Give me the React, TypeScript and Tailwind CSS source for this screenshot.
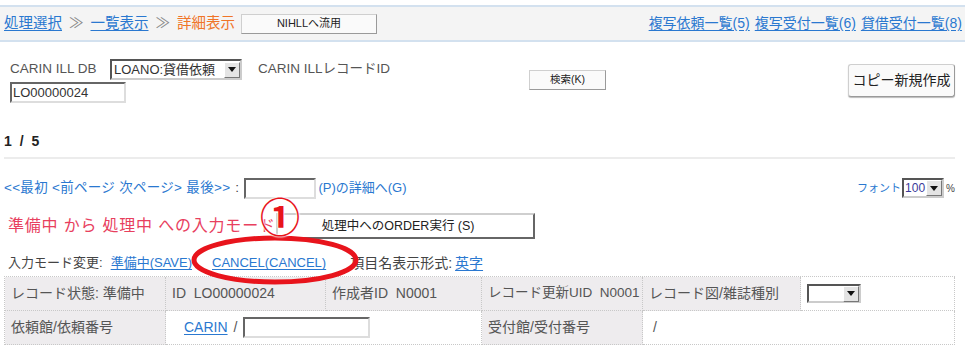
import React from 'react';

const font = { fontFamily: '"Liberation Sans", "Noto Sans CJK JP", sans-serif' };

const Link = ({ children, className = '' }: { children: React.ReactNode; className?: string }) => (
  <a className={`text-[#2a78d0] underline underline-offset-2 cursor-pointer ${className}`}>{children}</a>
);

const SelectBox = ({ value, className = '' }: { value: string; className?: string }) => (
  <div className={`flex items-center border-2 border-t-[#555] border-l-[#555] border-b-[#ccc] border-r-[#ccc] bg-white ${className}`}>
    <span className="flex-1 pl-[2px] text-[#333] whitespace-nowrap">{value}</span>
    <span className="w-[16px] h-[16px] shrink-0 bg-[#e4e4e4] border border-t-[#fff] border-l-[#fff] border-b-[#777] border-r-[#777] flex items-center justify-center">
      <svg width="8" height="5" viewBox="0 0 8 5"><path d="M0 0h8L4 5z" fill="#111" /></svg>
    </span>
  </div>
);

const Button = ({ children, className = '' }: { children: React.ReactNode; className?: string }) => (
  <div className={`flex items-center justify-center bg-[#fafafa] border border-[#cfcfcf] border-b-[#9a9a9a] border-r-[#9a9a9a] text-[#222] ${className}`}>
    {children}
  </div>
);

const Cell = ({ children, grey = true, className = '' }: { children?: React.ReactNode; grey?: boolean; className?: string }) => (
  <div className={`flex items-center px-[6px] border-r border-b border-dotted border-[#c8c8c8] whitespace-nowrap ${grey ? 'bg-[#eeecee]' : 'bg-white'} ${className}`}>
    {children}
  </div>
);

export default function App() {
  return (
    <div className="relative w-[965px] h-[351px] bg-white overflow-hidden text-[13px] text-[#444]" style={font}>
      {/* top band */}
      <div className="mt-[5px] h-[37px] border-y-2 border-[#d3e1ef] bg-[#f4f4f4] flex items-center justify-between pl-[4px] pr-[3px]">
        <div className="flex items-center text-[14.5px]">
          <Link>処理選択</Link>
          <span className="mx-[7px] text-[#888]">≫</span>
          <Link>一覧表示</Link>
          <span className="mx-[7px] text-[#888]">≫</span>
          <span className="text-[#f07528]">詳細表示</span>
          <Button className="ml-[6px] w-[136px] h-[20px] text-[11px]">NIHLLへ流用</Button>
        </div>
        <div className="flex items-center gap-[5px] text-[14px]">
          <Link>複写依頼一覧(5)</Link>
          <Link>複写受付一覧(6)</Link>
          <Link>貸借受付一覧(8)</Link>
        </div>
      </div>

      {/* DB row */}
      <div className="mt-[17px] flex items-start pl-[10px] pr-[10px] h-[44px]">
        <div className="w-[519px] flex flex-col">
          <div className="flex items-center h-[21px] text-[13.5px]">
            <span className="w-[100px] text-[#555]">CARIN ILL DB</span>
            <SelectBox value="LOANO:貸借依頼" className="w-[132px] h-[21px] text-[13px]" />
            <span className="ml-[16px] text-[#555]">CARIN ILLレコードID</span>
          </div>
          <div className="mt-[2px] w-[116px] h-[21px] border-2 border-t-[#666] border-l-[#666] border-b-[#ddd] border-r-[#ddd] flex items-center pl-[1px] text-[#333]">
            LO00000024
          </div>
        </div>
        <Button className="mt-[11px] w-[77px] h-[20px] text-[10.5px]">検索(K)</Button>
        <div className="flex-1" />
        <Button className="mt-[5px] w-[107px] h-[33px] text-[14px] rounded-[3px] shadow-[0_1px_1px_#bbb]">コピー新規作成</Button>
      </div>

      {/* page count */}
      <div className="mt-[28px] pl-[4px] font-bold text-[#222] text-[14px] tracking-[2px]">1 / 5</div>
      <div className="mt-[5px] mx-[4px] mr-[10px] border-t-2 border-[#ececec]" />

      {/* pagination */}
      <div className="mt-[19px] flex items-center pl-[4px] pr-[10px] h-[20px]">
        <div className="flex items-center text-[13.5px] text-[#2a78d0] tracking-[0.3px]">
          <span>&lt;&lt;最初 &lt;前ページ 次ページ&gt; 最後&gt;&gt;</span>
          <span className="ml-[5px] text-[#444]">:</span>
        </div>
        <div className="ml-[5px] w-[72px] h-[21px] border-2 border-t-[#666] border-l-[#666] border-b-[#ddd] border-r-[#ddd] bg-white" />
        <span className="ml-[2px] text-[13px] text-[#2a78d0]">(P)の詳細へ(G)</span>
        <div className="flex-1" />
        <span className="text-[11px] text-[#2a78d0] mr-[1px]">フォント</span>
        <SelectBox value="100" className="w-[42px] h-[20px] text-[12px] [&>span:first-child]:text-[#3a3a9a] [&>span:first-child]:pl-[1px]" />
        <span className="ml-[2px] text-[10px] text-[#444]">%</span>
      </div>

      {/* red mode row */}
      <div className="mt-[15px] flex items-center pl-[8px] h-[26px]">
        <span className="text-[16px] text-[#e8405e] tracking-[0.8px] whitespace-nowrap">準備中 から 処理中 への入力モード</span>
        <div className="w-[259px] h-[26px] border-2 border-t-[#cfcfcf] border-l-[#cfcfcf] border-b-[#666] border-r-[#666] bg-white flex items-center pl-[44px] text-[12.5px] text-[#222]">
          処理中へのORDER実行 (S)
        </div>
      </div>

      {/* input mode row */}
      <div className="mt-[14px] flex items-center pl-[8px] h-[20px] text-[13px]">
        <span className="text-[#444]">入力モード変更:</span>
        <Link className="ml-[8px]">準備中(SAVE)</Link>
        <Link className="ml-[20px]">CANCEL(CANCEL)</Link>
        <span className="ml-[24px] text-[#444] text-[14px]">項目名表示形式:</span>
        <Link className="ml-[3px] text-[14px]">英字</Link>
      </div>

      {/* table */}
      <div className="mt-[3px] mx-[4px] mr-[10px] grid grid-cols-[161px_160px_156px_161px_158px_1fr] border-t border-l border-dotted border-[#c8c8c8] text-[14px] text-[#555]">
        <Cell className="h-[34px]">レコード状態: 準備中</Cell>
        <Cell>ID&nbsp; LO00000024</Cell>
        <Cell>作成者ID&nbsp; N0001</Cell>
        <Cell className="text-[13.5px]">レコード更新UID&nbsp; N0001</Cell>
        <Cell>レコード図/雑誌種別</Cell>
        <Cell grey={false}>
          <SelectBox value="" className="w-[54px] h-[19px]" />
        </Cell>
        <Cell className="h-[34px]">依頼館/依頼番号</Cell>
        <Cell grey={false} className="col-span-2 pl-[18px]">
          <Link>CARIN</Link>
          <span className="mx-[6px]">/</span>
          <div className="w-[127px] h-[21px] border-2 border-t-[#666] border-l-[#666] border-b-[#ddd] border-r-[#ddd]" />
        </Cell>
        <Cell>受付館/受付番号</Cell>
        <Cell grey={false} className="col-span-2 pl-[10px]">/</Cell>
      </div>

      {/* annotation overlay */}
      <svg className="absolute left-[189px] top-[233px] pointer-events-none" width="172" height="54" viewBox="0 0 172 54">
        <ellipse cx="86" cy="27" rx="81" ry="22" fill="none" stroke="#e8141c" strokeWidth="5" />
      </svg>
      <div className="absolute left-[258px] top-[193px] w-[44px] h-[44px] flex items-center justify-center text-[40px] font-bold leading-none text-[#e8141c] pointer-events-none [text-shadow:0_0_2px_#fff,0_0_2px_#fff,0_0_2px_#fff]" style={{ fontFamily: '"Noto Sans CJK JP", sans-serif' }}>
        ①
      </div>
    </div>
  );
}
